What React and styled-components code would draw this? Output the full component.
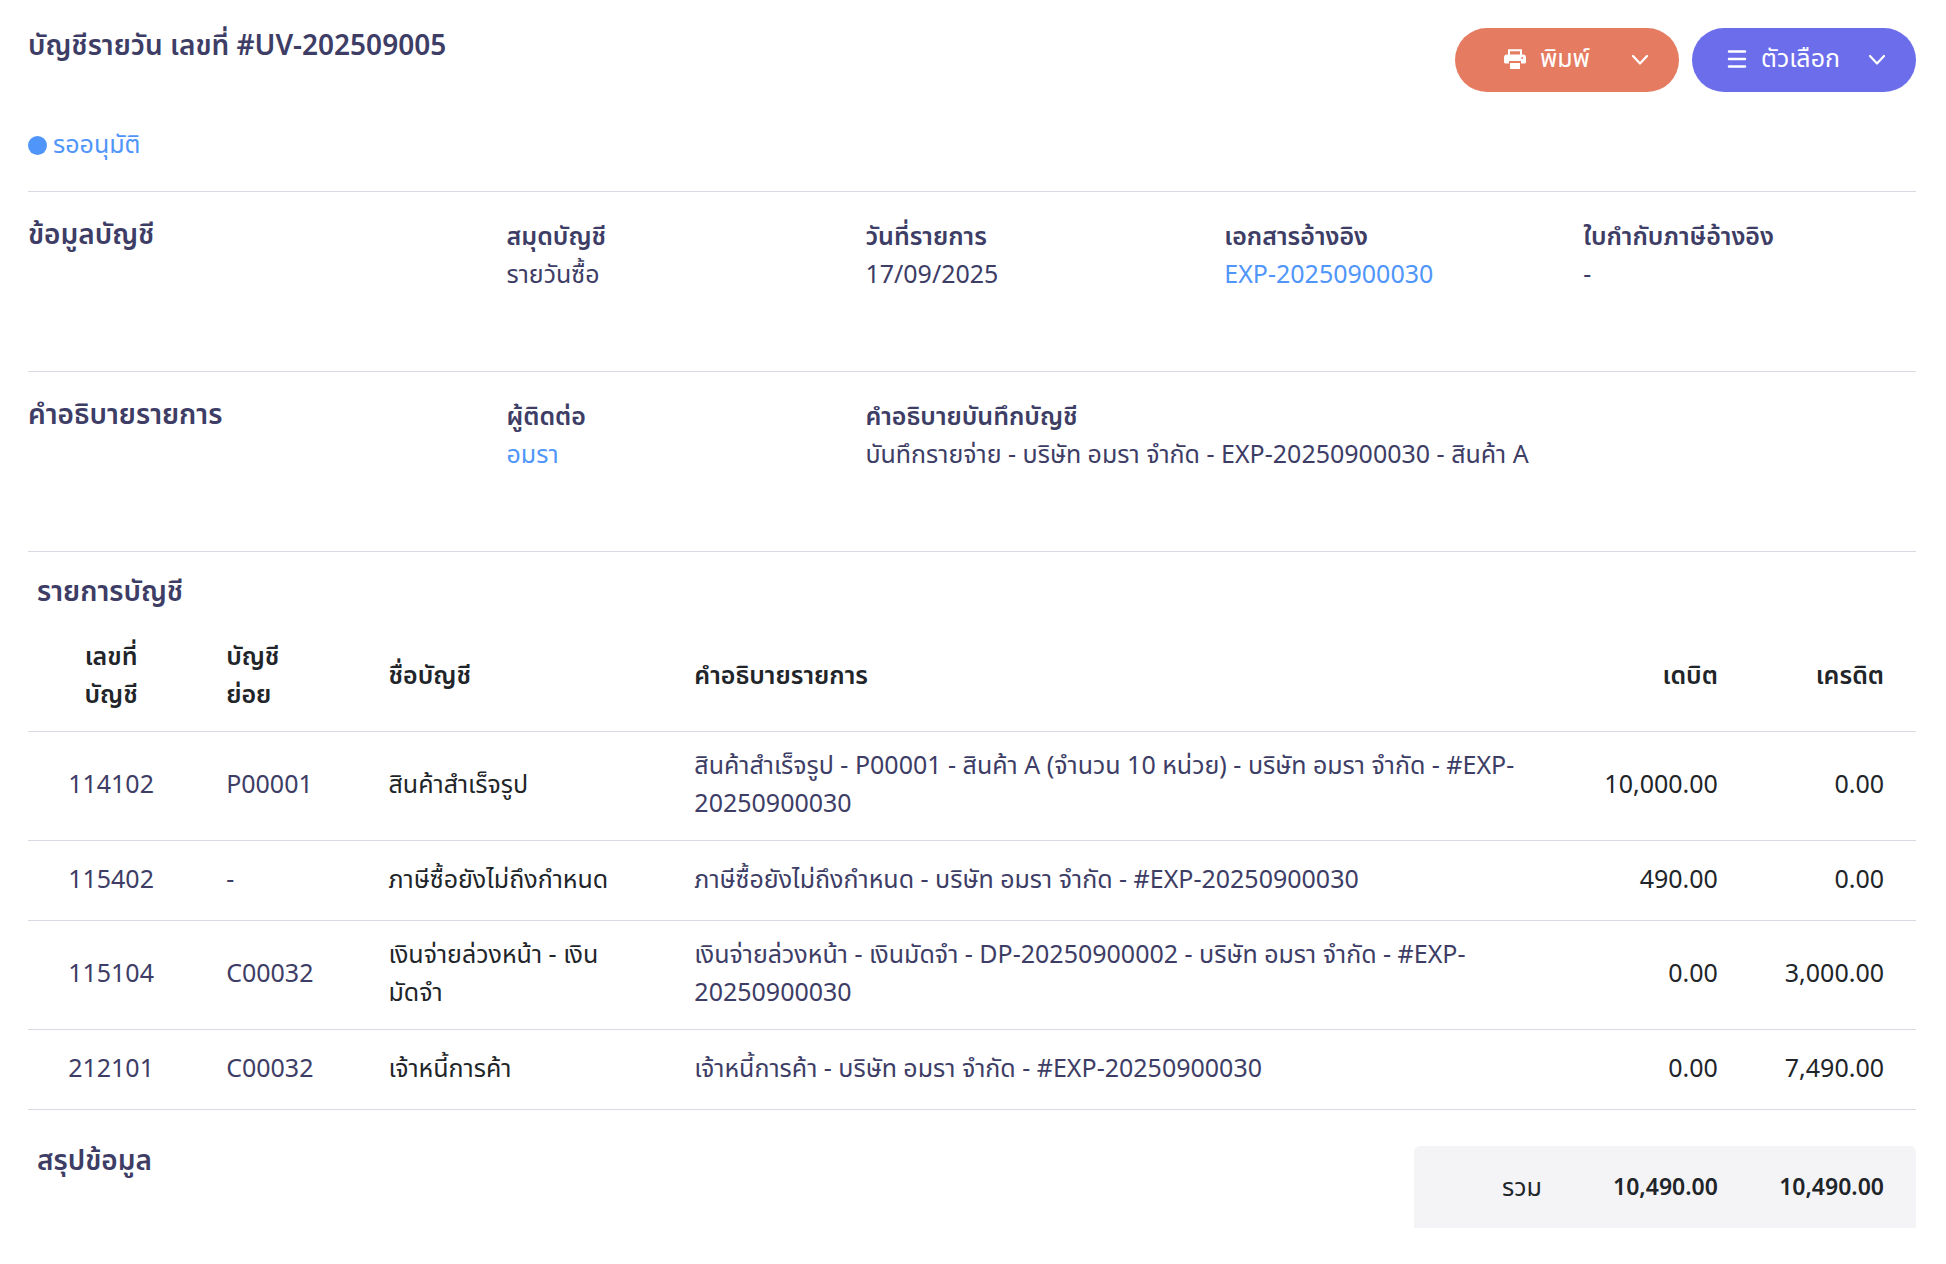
import React from 'react';
import styled, { createGlobalStyle } from 'styled-components';

const colors = {
  ink: '#3d3d66',
  dark: '#212529',
  blue: '#5096fa',
  orange: '#e57b61',
  purple: '#6c6deb',
  line: '#dadae6',
  panel: '#f4f4f7'
};

const GlobalStyle = createGlobalStyle`
  * {
    box-sizing: border-box;
  }

  body {
    margin: 0;
    background: #fff;
    color: ${colors.ink};
    font-family: "Noto Sans", "Noto Sans Thai", "Open Sans", sans-serif;
    font-size: 25px;
    font-weight: 400;
    line-height: 38px;
  }
`;

const Page = styled.main`
  padding: 28px 30px 36px 28px;
`;

const Header = styled.header`
  display: flex;
  justify-content: space-between;
  align-items: flex-start;
`;

const Title = styled.h1`
  margin: 0;
  font-size: 28px;
  font-weight: 600;
  line-height: 32px;
`;

const Buttons = styled.div`
  display: flex;
  gap: 13px;
`;

const PillButton = styled.button`
  display: flex;
  align-items: center;
  justify-content: flex-end;
  width: 224px;
  height: 64px;
  padding: 0 30px 2px;
  border: none;
  border-radius: 32px;
  background: ${({ $color }) => $color};
  color: #fff;
  font: inherit;
  cursor: pointer;
`;

const ButtonText = styled.span`
  margin: 0 ${({ $gap }) => $gap}px 0 14px;
  padding-bottom: 4px;
`;

const Status = styled.div`
  display: flex;
  align-items: center;
  gap: 6px;
  padding: 32px 0 25px;
  color: ${colors.blue};
`;

const StatusText = styled.span`
  padding-bottom: 4px;
`;

const Dot = styled.span`
  width: 19px;
  height: 19px;
  border-radius: 50%;
  background: ${colors.blue};
`;

const Section = styled.section`
  border-top: 1px solid ${colors.line};
`;

const InfoGrid = styled.div`
  display: grid;
  grid-template-columns: 4fr 3fr 3fr 3fr 3fr;
  min-height: 179px;
  margin: 0 -11px 0 -15px;
  padding-top: 24px;
`;

const SectionTitle = styled.h2`
  margin: 0;
  padding: 0 15px;
  font-size: 28px;
  font-weight: 600;
  line-height: 34px;
`;

const Field = styled.div`
  grid-column: span ${({ $span }) => $span || 1};
  padding: 0 15px;
`;

const Label = styled.div`
  font-weight: 600;
`;

const Link = styled.a`
  color: ${colors.blue};
  text-decoration: none;
`;

const ListTitle = styled.h2`
  margin: 0;
  padding: 21px 9px 0;
  font-size: 28px;
  font-weight: 600;
  line-height: 34px;
`;

const Table = styled.table`
  width: 100%;
  margin-top: 16px;
  border-collapse: collapse;
  table-layout: fixed;
`;

const Row = styled.tr`
  height: 80px;
  border-bottom: 1px solid ${colors.line};
`;

const Th = styled.th`
  width: ${({ $width }) => $width};
  padding: 13px 32px 19px;
  color: ${colors.dark};
  font-weight: 600;
  text-align: ${({ $align }) => $align || 'left'};
`;

const Td = styled.td`
  padding: 13px 32px 19px;
  color: ${({ $dark }) => ($dark ? colors.dark : colors.ink)};
  text-align: ${({ $align }) => $align || 'left'};
`;

const AmountCell = styled(Td)`
  padding-left: 16px;
  color: ${colors.dark};
  text-align: right;
`;

const Summary = styled.section`
  display: flex;
  justify-content: space-between;
  align-items: flex-start;
  padding-top: 32px;
`;

const SummaryTitle = styled(ListTitle)`
  padding-top: 0;
`;

const Totals = styled.div`
  display: grid;
  grid-template-columns: 160fr 176fr 166fr;
  align-items: center;
  width: 26.6%;
  height: 82px;
  margin-top: 4px;
  padding-bottom: 3px;
  border-radius: 6px 6px 0 0;
  background: ${colors.panel};
  color: ${colors.dark};
  text-align: right;
`;

const TotalCell = styled.div`
  padding-right: 32px;
`;

const TotalValue = styled(TotalCell)`
  font-size: 23px;
  font-weight: 600;
`;

const PrintIcon = () => (
  <svg width="22" height="20" viewBox="0 0 22 20" aria-hidden="true">
    <path d="M5 6V1.2h12V6" fill="none" stroke="#fff" strokeWidth="2" />
    <path
      fill="#fff"
      fillRule="evenodd"
      d="M3 5.5h16a3 3 0 0 1 3 3V13a1.6 1.6 0 0 1-1.6 1.6H17V12H5v2.6H1.6A1.6 1.6 0 0 1 0 13V8.500a3 3 0 0 1 3-3zM18.200 8a1 1 0 1 0 0 2 1 1 0 0 0 0-2z"
    />
    <path d="M6 14h10v6H6z" fill="#fff" />
  </svg>
);

const MenuIcon = () => (
  <svg width="20" height="18" viewBox="0 0 20 18" aria-hidden="true">
    <path d="M2 1.500h16M2 9h16M2 16.500h16" stroke="#fff" strokeWidth="2.500" strokeLinecap="round" />
  </svg>
);

const ChevronIcon = () => (
  <svg width="18" height="14" viewBox="0 0 18 14" aria-hidden="true">
    <path d="M2 4l7 7.500L16 4" fill="none" stroke="#fff" strokeWidth="2.200" strokeLinecap="round" strokeLinejoin="round" />
  </svg>
);

const columns = [
  { name: 'เลขที่บัญชี', width: '8.8%', align: 'center' },
  { name: 'บัญชีย่อย', width: '8.6%' },
  { name: 'ชื่อบัญชี', width: '16.2%' },
  { name: 'คำอธิบายรายการ' },
  { name: 'เดบิต', width: '9.3%', align: 'right' },
  { name: 'เครดิต', width: '8.8%', align: 'right' }
];

const rows = [
  {
    no: '114102',
    sub: 'P00001',
    name: 'สินค้าสำเร็จรูป',
    detail: 'สินค้าสำเร็จรูป - P00001 - สินค้า A (จำนวน 10 หน่วย) - บริษัท อมรา จำกัด - #EXP-20250900030',
    debit: '10,000.00',
    credit: '0.00'
  },
  {
    no: '115402',
    sub: '-',
    name: 'ภาษีซื้อยังไม่ถึงกำหนด',
    detail: 'ภาษีซื้อยังไม่ถึงกำหนด - บริษัท อมรา จำกัด - #EXP-20250900030',
    debit: '490.00',
    credit: '0.00'
  },
  {
    no: '115104',
    sub: 'C00032',
    name: 'เงินจ่ายล่วงหน้า - เงินมัดจำ',
    detail: 'เงินจ่ายล่วงหน้า - เงินมัดจำ - DP-20250900002 - บริษัท อมรา จำกัด - #EXP-20250900030',
    debit: '0.00',
    credit: '3,000.00'
  },
  {
    no: '212101',
    sub: 'C00032',
    name: 'เจ้าหนี้การค้า',
    detail: 'เจ้าหนี้การค้า - บริษัท อมรา จำกัด - #EXP-20250900030',
    debit: '0.00',
    credit: '7,490.00'
  }
];

function App() {
  const renderRows = () => {
    return rows.map(({ no, sub, name, detail, debit, credit }) => (
      <Row key={no}>
        <Td $align="center">{no}</Td>
        <Td>{sub}</Td>
        <Td $dark>{name}</Td>
        <Td>{detail}</Td>
        <AmountCell>{debit}</AmountCell>
        <AmountCell>{credit}</AmountCell>
      </Row>
    ));
  };

  return (
    <Page lang="th">
      <GlobalStyle />

      <Header>
        <Title>บัญชีรายวัน เลขที่ #UV-202509005</Title>
        <Buttons>
          <PillButton type="button" $color={colors.orange}>
            <PrintIcon />
            <ButtonText $gap={41}>พิมพ์</ButtonText>
            <ChevronIcon />
          </PillButton>
          <PillButton type="button" $color={colors.purple}>
            <MenuIcon />
            <ButtonText $gap={28}>ตัวเลือก</ButtonText>
            <ChevronIcon />
          </PillButton>
        </Buttons>
      </Header>

      <Status>
        <Dot />
        <StatusText>รออนุมัติ</StatusText>
      </Status>

      <Section>
        <InfoGrid>
          <SectionTitle>ข้อมูลบัญชี</SectionTitle>
          <Field>
            <Label>สมุดบัญชี</Label>
            รายวันซื้อ
          </Field>
          <Field>
            <Label>วันที่รายการ</Label>
            17/09/2025
          </Field>
          <Field>
            <Label>เอกสารอ้างอิง</Label>
            <Link href="#">EXP-20250900030</Link>
          </Field>
          <Field>
            <Label>ใบกำกับภาษีอ้างอิง</Label>
            -
          </Field>
        </InfoGrid>
      </Section>

      <Section>
        <InfoGrid>
          <SectionTitle>คำอธิบายรายการ</SectionTitle>
          <Field>
            <Label>ผู้ติดต่อ</Label>
            <Link href="#">อมรา</Link>
          </Field>
          <Field $span={3}>
            <Label>คำอธิบายบันทึกบัญชี</Label>
            บันทึกรายจ่าย - บริษัท อมรา จำกัด - EXP-20250900030 - สินค้า A
          </Field>
        </InfoGrid>
      </Section>

      <Section>
        <ListTitle>รายการบัญชี</ListTitle>
        <Table>
          <thead>
            <Row>
              {columns.map(({ name, width, align }) => (
                <Th key={name} $width={width} $align={align}>{name}</Th>
              ))}
            </Row>
          </thead>
          <tbody>{renderRows()}</tbody>
        </Table>
      </Section>

      <Summary>
        <SummaryTitle>สรุปข้อมูล</SummaryTitle>
        <Totals>
          <TotalCell>รวม</TotalCell>
          <TotalValue>10,490.00</TotalValue>
          <TotalValue>10,490.00</TotalValue>
        </Totals>
      </Summary>
    </Page>
  );
}

export default App;
